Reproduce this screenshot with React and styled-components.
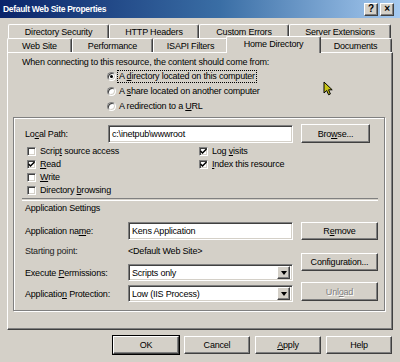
import React from "react";
import styled, { createGlobalStyle, css } from "styled-components";

const Global = createGlobalStyle`
  html, body { margin: 0; padding: 0; background: #d4d0c8; }
  body {
    font-family: "Liberation Sans", Arial, sans-serif;
    font-size: 9px;
    letter-spacing: -0.2px;
    color: #000;
  }
  u { text-decoration: underline; text-underline-offset: 1px; }
`;

const face = "#d4d0c8";

const raised = css`
  border-style: solid;
  border-width: 1px;
  border-color: #fff #404040 #404040 #fff;
  box-shadow: inset -1px -1px 0 #808080;
`;

const sunken = css`
  border-style: solid;
  border-width: 1px;
  border-color: #808080 #fff #fff #808080;
  box-shadow: inset 1px 1px 0 #404040, inset -1px -1px 0 ${face};
`;

const Window = styled.div`
  position: relative;
  width: 400px;
  height: 362px;
  background: ${face};
  overflow: hidden;
`;

const TitleBar = styled.div`
  height: 18px;
  display: flex;
  align-items: center;
  justify-content: space-between;
  padding: 0 6px 0 3px;
  box-sizing: border-box;
  background: linear-gradient(to right, #0a246a 0%, #3a6ea5 55%, #a6caf0 100%);
`;

const Title = styled.span`
  color: #fff;
  font-weight: bold;
  font-size: 8.5px;
  letter-spacing: -0.3px;
`;

const Caps = styled.div`
  display: flex;
  gap: 2px;
`;

const CapBtn = styled.div`
  ${raised};
  width: 12px;
  height: 11px;
  background: ${face};
  display: flex;
  align-items: center;
  justify-content: center;
  font-weight: bold;
  font-size: 10px;
  line-height: 1;
`;

const Body = styled.div`
  padding: 6px 0 0 7px;
`;

const TabRow = styled.div`
  display: flex;
  height: 14px;
  padding-left: ${(p) => p.$indent || 0}px;
`;

const Tab = styled.div`
  ${raised};
  box-shadow: inset -1px 0 0 #808080;
  border-bottom: none;
  border-radius: 2px 2px 0 0;
  box-sizing: border-box;
  width: ${(p) => p.$w}px;
  height: 14px;
  background: ${face};
  display: flex;
  align-items: center;
  justify-content: center;
  white-space: nowrap;
  ${(p) =>
    p.$active &&
    css`
      position: relative;
      z-index: 2;
      margin: -2px -2px 0 -2px;
      width: ${p.$w + 4}px;
      height: 17px;
      padding-bottom: 2px;
    `}
`;

const Panel = styled.div`
  ${raised};
  box-sizing: border-box;
  width: 386px;
  height: 278px;
  background: ${face};
`;

const Intro = styled.div`
  margin: 3px 0 0 14px;
  height: 12px;
  line-height: 12px;
`;

const RadioList = styled.div`
  margin: 1px 0 0 99px;
`;

const OptRow = styled.label`
  display: flex;
  align-items: center;
  gap: 1px;
  height: ${(p) => p.$h || 15}px;
`;

const RadioDot = styled.span`
  ${sunken};
  box-sizing: border-box;
  width: 9px;
  height: 9px;
  border-radius: 50%;
  background: #fff;
  display: flex;
  align-items: center;
  justify-content: center;
  &::after {
    content: "";
    width: 3px;
    height: 3px;
    border-radius: 50%;
    background: ${(p) => (p.$on ? "#000" : "transparent")};
  }
`;

const OptText = styled.span`
  padding: 0 1px;
  line-height: 11px;
  border: 1px ${(p) => (p.$focus ? "dotted #000" : "solid transparent")};
  white-space: nowrap;
`;

const Group = styled.div`
  margin: 3px 7px 0 5px;
  border: 1px solid #808080;
  box-shadow: inset 1px 1px 0 #fff, 1px 1px 0 #fff;
  padding: 6px 6px 8px 11px;
`;

const PathRow = styled.div`
  display: grid;
  grid-template-columns: 83px 185px 77px;
  column-gap: 8px;
  column-gap: 0;
  height: 19px;
  align-items: center;
  & > :nth-child(3) { margin-left: 8px; }
`;

const Label = styled.span`
  white-space: nowrap;
  color: ${(p) => (p.$dim ? "#222" : "#000")};
`;

const Field = styled.div`
  ${sunken};
  box-sizing: border-box;
  height: ${(p) => p.$h || 18}px;
  background: #fff;
  display: flex;
  align-items: center;
  padding-left: 3px;
  white-space: nowrap;
  overflow: hidden;
`;

const SelectBox = styled(Field)`
  padding-right: 2px;
  justify-content: space-between;
`;

const DropBtn = styled.span`
  ${raised};
  box-sizing: border-box;
  width: 13px;
  height: 13px;
  background: ${face};
  display: flex;
  align-items: center;
  justify-content: center;
  &::after {
    content: "";
    border-left: 3.5px solid transparent;
    border-right: 3.5px solid transparent;
    border-top: 4px solid #000;
  }
`;

const Button = styled.div`
  ${raised};
  box-sizing: border-box;
  height: ${(p) => p.$h || 18}px;
  background: ${face};
  display: flex;
  align-items: center;
  justify-content: center;
  white-space: nowrap;
  color: ${(p) => (p.$disabled ? "#808080" : "#000")};
  text-shadow: ${(p) => (p.$disabled ? "1px 1px 0 #fff" : "none")};
  ${(p) =>
    p.$default &&
    css`
      outline: 1px solid #000;
      outline-offset: 0;
      border-color: #fff #404040 #404040 #fff;
    `}
`;

const CheckGrid = styled.div`
  margin-top: 2px;
  display: grid;
  grid-template-columns: 172px 1fr;
  grid-auto-rows: 13px;
  grid-auto-flow: column;
  grid-template-rows: repeat(4, 13px);
  padding-left: 2px;
`;

const Box = styled.span`
  ${sunken};
  box-sizing: border-box;
  width: 9px;
  height: 9px;
  background: #fff;
  display: flex;
  align-items: center;
  justify-content: center;
  margin-right: 1px;
`;

const Separator = styled.div`
  margin: 1px 0 0 -3px;
  height: 1px;
  border-top: 1px solid #808080;
  border-bottom: 1px solid #fff;
`;

const Section = styled.div`
  margin-top: 1px;
  height: 12px;
  line-height: 12px;
`;

const AppGrid = styled.div`
  margin-top: 8px;
  display: grid;
  grid-template-columns: 268px 77px;
  column-gap: 8px;
`;

const FieldRow = styled.div`
  display: grid;
  grid-template-columns: 103px 165px;
  align-items: center;
  height: ${(p) => p.$h}px;
  margin-top: ${(p) => p.$mt || 0}px;
`;

const SideButtons = styled.div`
  display: flex;
  flex-direction: column;
`;

const Spacer = styled.div`
  height: ${(p) => p.$h}px;
`;

const Footer = styled.div`
  width: 386px;
  margin-top: 6px;
  display: flex;
  justify-content: flex-end;
  gap: 5px;
  padding-right: 1px;
  box-sizing: border-box;
`;

const FootBtn = styled(Button)`
  width: 66px;
`;

const Cursor = styled.svg`
  position: absolute;
  left: 323px;
  top: 81px;
`;

function Check({ on }) {
  return (
    <Box>
      {on && (
        <svg width="7" height="7" viewBox="0 0 7 7">
          <path d="M0.5 3 L2.5 5 L6.5 1" stroke="#000" strokeWidth="1.5" fill="none" />
        </svg>
      )}
    </Box>
  );
}

function CheckItem({ on, children }) {
  return (
    <OptRow $h={13}>
      <Check on={on} />
      <OptText>{children}</OptText>
    </OptRow>
  );
}

function Select({ value }) {
  return (
    <SelectBox $h={17}>
      <span>{value}</span>
      <DropBtn />
    </SelectBox>
  );
}

const backTabs = [
  ["Directory Security", 101],
  ["HTTP Headers", 90],
  ["Custom Errors", 90],
  ["Server Extensions", 102],
];

const frontTabs = [
  ["Web Site", 65],
  ["Performance", 81],
  ["ISAPI Filters", 75],
  ["Home Directory", 91, true],
  ["Documents", 73],
];

export default function App() {
  return (
    <Window>
      <Global />
      <TitleBar>
        <Title>Default Web Site Properties</Title>
        <Caps>
          <CapBtn>?</CapBtn>
          <CapBtn>×</CapBtn>
        </Caps>
      </TitleBar>
      <Body>
        <TabRow $indent={1}>
          {backTabs.map(([t, w]) => (
            <Tab key={t} $w={w}>{t}</Tab>
          ))}
        </TabRow>
        <TabRow>
          {frontTabs.map(([t, w, a]) => (
            <Tab key={t} $w={w} $active={a}>{t}</Tab>
          ))}
        </TabRow>
        <Panel>
          <Intro>When connecting to this resource, the content should come from:</Intro>
          <RadioList>
            <OptRow>
              <RadioDot $on />
              <OptText $focus>A <u>d</u>irectory located on this computer</OptText>
            </OptRow>
            <OptRow>
              <RadioDot />
              <OptText>A <u>s</u>hare located on another computer</OptText>
            </OptRow>
            <OptRow>
              <RadioDot />
              <OptText>A redirection to a <u>U</u>RL</OptText>
            </OptRow>
          </RadioList>
          <Group>
            <PathRow>
              <Label>Lo<u>c</u>al Path:</Label>
              <Field $h={18}>c:\inetpub\wwwroot</Field>
              <Button $h={19}>Bro<u>w</u>se...</Button>
            </PathRow>
            <CheckGrid>
              <CheckItem>Scrip<u>t</u> source access</CheckItem>
              <CheckItem on><u>R</u>ead</CheckItem>
              <CheckItem><u>W</u>rite</CheckItem>
              <CheckItem>Directory <u>b</u>rowsing</CheckItem>
              <CheckItem on>Log <u>v</u>isits</CheckItem>
              <CheckItem on><u>I</u>ndex this resource</CheckItem>
            </CheckGrid>
            <Separator />
            <Section>Application Settings</Section>
            <AppGrid>
              <div>
                <FieldRow $h={18}>
                  <Label>Application na<u>m</u>e:</Label>
                  <Field>Kens Application</Field>
                </FieldRow>
                <FieldRow $h={12} $mt={5}>
                  <Label $dim>Starting point:</Label>
                  <Label>&lt;Default Web Site&gt;</Label>
                </FieldRow>
                <FieldRow $h={17} $mt={7}>
                  <Label>Execute <u>P</u>ermissions:</Label>
                  <Select value="Scripts only" />
                </FieldRow>
                <FieldRow $h={17} $mt={4}>
                  <Label>Applicatio<u>n</u> Protection:</Label>
                  <Select value="Low (IIS Process)" />
                </FieldRow>
              </div>
              <SideButtons>
                <Button>R<u>e</u>move</Button>
                <Spacer $h={13} />
                <Button>Configuration...</Button>
                <Spacer $h={11} />
                <Button $h={19} $disabled>Unl<u>o</u>ad</Button>
              </SideButtons>
            </AppGrid>
          </Group>
        </Panel>
        <Footer>
          <FootBtn $default>OK</FootBtn>
          <FootBtn>Cancel</FootBtn>
          <FootBtn><u>A</u>pply</FootBtn>
          <FootBtn>Help</FootBtn>
        </Footer>
      </Body>
      <Cursor width="11" height="15" viewBox="0 0 11 15">
        <path d="M1 1 L1 12 L3.7 9.5 L5.6 13.8 L7.4 13 L5.6 8.8 L9.2 8.8 Z" fill="#c8c416" stroke="#000" strokeWidth="1" />
      </Cursor>
    </Window>
  );
}
